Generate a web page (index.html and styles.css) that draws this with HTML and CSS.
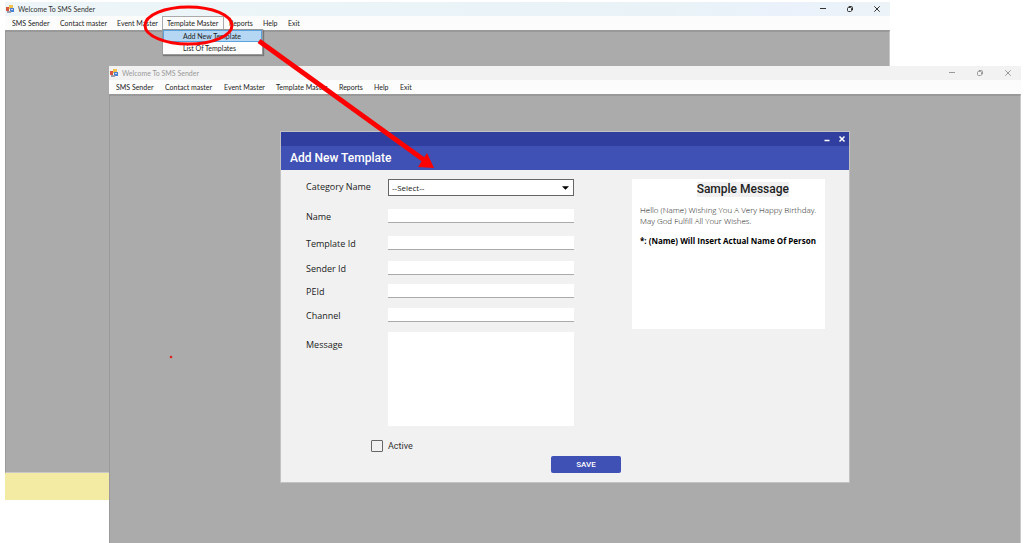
FILE: index.html
```html
<!DOCTYPE html>
<html lang="en">
<head>
<meta charset="utf-8">
<title>Welcome To SMS Sender</title>
<link rel="stylesheet" href="styles.css">
</head>
<body>
<main class="desktop">
  <section class="window window-back" aria-label="SMS Sender main window">
    <header class="titlebar">
      <svg class="app-icon" viewBox="0 0 9 9" aria-hidden="true"><rect x="3" y="0" width="4" height="4" fill="#f2c14b"/><rect x="0" y="2" width="3" height="4" fill="#d4583f"/><rect x="4" y="3" width="4" height="4" fill="#4d7fd0"/><rect x="1" y="6" width="4" height="2" fill="#9a9fb0"/><rect x="5" y="4" width="2" height="1" fill="#bcd3f5"/></svg>
      <span class="title">Welcome To SMS Sender</span>
      <div class="controls">
        <button type="button" aria-label="Minimize"><svg viewBox="0 0 8 8"><path d="M1 3.500H7"/></svg></button>
        <button type="button" aria-label="Restore"><svg viewBox="0 0 8 8"><rect x="1.500" y="2.500" width="4" height="4" rx="1"/><path d="M2.700 1.500H5.300Q6.500 1.500 6.500 2.700V5.300"/></svg></button>
        <button type="button" aria-label="Close"><svg viewBox="0 0 8 8"><path d="M1.300 1.300L6.700 6.700M6.700 1.300L1.300 6.700"/></svg></button>
      </div>
    </header>
    <nav class="menubar">
      <button type="button">SMS Sender</button>
      <button type="button">Contact master</button>
      <button type="button">Event Master</button>
      <div class="menu-open">
        <button type="button" class="open">Template Master</button>
        <div class="dropdown">
          <button type="button" class="selected">Add New Template</button>
          <button type="button">List Of Templates</button>
        </div>
      </div>
      <button type="button">Reports</button>
      <button type="button">Help</button>
      <button type="button">Exit</button>
    </nav>
    <div class="workspace"></div>
    <footer class="statusbar"></footer>
  </section>

  <section class="window window-front" aria-label="SMS Sender template window">
    <header class="titlebar">
      <svg class="app-icon" viewBox="0 0 9 9" aria-hidden="true"><rect x="3" y="0" width="4" height="4" fill="#f2c14b"/><rect x="0" y="2" width="3" height="4" fill="#d4583f"/><rect x="4" y="3" width="4" height="4" fill="#4d7fd0"/><rect x="1" y="6" width="4" height="2" fill="#9a9fb0"/><rect x="5" y="4" width="2" height="1" fill="#bcd3f5"/></svg>
      <span class="title">Welcome To SMS Sender</span>
      <div class="controls">
        <button type="button" aria-label="Minimize"><svg viewBox="0 0 8 8"><path d="M1 3.500H7"/></svg></button>
        <button type="button" aria-label="Restore"><svg viewBox="0 0 8 8"><rect x="1.500" y="2.500" width="4" height="4" rx="1"/><path d="M2.700 1.500H5.300Q6.500 1.500 6.500 2.700V5.300"/></svg></button>
        <button type="button" aria-label="Close"><svg viewBox="0 0 8 8"><path d="M1.300 1.300L6.700 6.700M6.700 1.300L1.300 6.700"/></svg></button>
      </div>
    </header>
    <nav class="menubar">
      <button type="button">SMS Sender</button>
      <button type="button">Contact master</button>
      <button type="button">Event Master</button>
      <button type="button">Template Master</button>
      <button type="button">Reports</button>
      <button type="button">Help</button>
      <button type="button">Exit</button>
    </nav>
    <div class="workspace">
      <form class="dialog">
        <div class="dialog-bar">
          <button type="button" aria-label="Minimize"><svg viewBox="0 0 8 8"><path d="M1.500 5.500H6.500"/></svg></button>
          <button type="button" aria-label="Close"><svg viewBox="0 0 8 8"><path d="M1.500 1.500L6.500 6.500M6.500 1.500L1.500 6.500"/></svg></button>
        </div>
        <h1 class="dialog-title">Add New Template</h1>
        <div class="dialog-body">
          <div class="fields">
            <label for="category">Category Name</label>
            <select id="category"><option>--Select--</option></select>
            <label for="name">Name</label>
            <input type="text" id="name">
            <label for="template-id">Template Id</label>
            <input type="text" id="template-id">
            <label for="sender-id">Sender Id</label>
            <input type="text" id="sender-id">
            <label for="peid">PEId</label>
            <input type="text" id="peid">
            <label for="channel">Channel</label>
            <input type="text" id="channel">
            <label for="message" class="message-label">Message</label>
            <textarea id="message"></textarea>
          </div>
          <aside class="sample">
            <h2>Sample Message</h2>
            <p>Hello (Name) Wishing You A Very Happy Birthday.<br>May God Fulfill All Your Wishes.</p>
            <p class="note">*: (Name) Will Insert Actual Name Of Person</p>
          </aside>
        </div>
        <label class="active"><input type="checkbox">Active</label>
        <button type="submit" class="save">SAVE</button>
      </form>
    </div>
  </section>

  <svg class="annotation" width="440" height="370" viewBox="0 0 440 370" aria-hidden="true">
    <ellipse cx="188.500" cy="25.500" rx="43.500" ry="18.500" fill="none" stroke="#f00" stroke-width="3"/>
    <path d="M259 41L424 160" stroke="#f00" stroke-width="4.800"/>
    <path d="M434 168L427 153L418 167Z" fill="#f00"/>
    <circle cx="171" cy="357" r="1.300" fill="#d22"/>
  </svg>
</main>
</body>
</html>
```

FILE: styles.css
```css
* { box-sizing: border-box; }
body {
  margin: 0;
  background: #fff;
  color: #222;
  font-family: Lato, "Open Sans", sans-serif;
}
button {
  margin: 0;
  padding: 0;
  border: 0;
  background: none;
  color: inherit;
  font: inherit;
  white-space: nowrap;
}
.desktop {
  position: relative;
  min-height: 100vh;
  overflow: hidden;
}

.window {
  position: absolute;
  display: flex;
  flex-direction: column;
  font-size: 7px;
}
.window-back { top: 2px; left: 5px; right: 134px; bottom: 43px; }
.window-front { top: 66px; left: 109px; right: 3px; bottom: 0; }

.titlebar {
  display: flex;
  align-items: center;
  gap: 3px;
  flex: none;
  height: 14px;
  padding: 0 9px 0 1px;
  background: #f2f2f2;
  color: #999;
}
.window-back .titlebar {
  background: linear-gradient(90deg, #edf5f8, #e9f3f7 75%, #eaf1fb 88%, #ecf4f8);
  color: #333;
}
.app-icon { width: 9px; height: 9px; }
.controls { display: flex; gap: 19px; margin-left: auto; }
.window-front .controls { gap: 20px; }
.controls button { width: 8px; height: 8px; }
.controls svg,
.dialog-bar svg {
  display: block;
  width: 8px;
  height: 8px;
  fill: none;
  stroke: currentColor;
}
.dialog-bar svg { stroke-width: 1.5; }

.menubar {
  display: grid;
  grid-template-columns: 48px 57px 50px 62px 34px 25px 25px;
  flex: none;
  height: 14px;
  padding-left: 7px;
  background: #fcfcfc;
  color: #222;
}
.window-front .menubar { grid-template-columns: 49px 59px 52px 63px 35px 26px 26px; }
.menubar button { text-align: left; }
.menu-open { position: relative; display: flex; }
.menubar .open {
  flex: none;
  width: 62px;
  margin-left: -5px;
  padding-left: 4px;
  border: solid #aaa;
  border-width: 0 1px;
  box-shadow: inset 0 1px #aaa;
  background: #fcfcfc;
}
.dropdown {
  position: absolute;
  z-index: 2;
  top: 13px;
  left: -5px;
  display: flex;
  flex-direction: column;
  width: 101px;
  background: #fdfdfd;
  border: 1px solid #999;
  box-shadow: 1px 1px 1px #777;
}
.dropdown button { height: 12px; padding-left: 19px; border: 1px solid transparent; }
.dropdown .selected { background: #b5d7f3; border-color: #5ba3dd; }

.workspace {
  flex: 1;
  background: #ababab;
  border: 1px solid #999;
  border-top: 2px solid #999;
  border-right-color: #c8c8c8;
}
.window-front .workspace { border-bottom: 0; }
.window-back .workspace { border-bottom-color: #c8c8c8; }
.statusbar { flex: none; height: 27px; background: #f3eba3; }

.dialog {
  display: flex;
  flex-direction: column;
  margin: 36px 171px 0;
  padding-bottom: 9px;
  background: #f1f1f1;
  box-shadow: 0 0 0 1px #c2c2c2;
}
.dialog-bar {
  display: flex;
  justify-content: flex-end;
  align-items: center;
  gap: 7px;
  height: 14px;
  padding-right: 3px;
  background: #303f9f;
  color: #fff;
}
.dialog-title {
  margin: 0;
  padding-left: 9px;
  background: #3f51b5;
  color: #fff;
  font: 500 12px/24px Roboto, sans-serif;
}
.dialog-body {
  display: flex;
  justify-content: space-between;
  align-items: flex-start;
  gap: 24px;
  padding: 9px 24px 0 25px;
}
.fields {
  display: grid;
  grid-template-columns: 82px 186px;
  grid-template-rows: 30px 27px 25px 23px 24px 24px 94px;
  align-items: start;
  font: 9px/15px "Open Sans", sans-serif;
}
.fields .message-label { margin-top: 5px; }
.fields input,
.fields textarea {
  width: 100%;
  height: 14px;
  padding: 0 3px;
  border: 0;
  border-bottom: 1px solid #aaa;
  background: #fff;
  font: inherit;
}
.fields textarea { height: 94px; border: 0; resize: none; }
.fields select {
  width: 100%;
  height: 17px;
  padding: 0 3px;
  border: 1px solid #666;
  border-radius: 0;
  appearance: none;
  background: #fff url("data:image/svg+xml,%3Csvg xmlns='http://www.w3.org/2000/svg' viewBox='0 0 8 4'%3E%3Cpath d='M0 0H8L4 4Z'/%3E%3C/svg%3E") no-repeat right 4px center / 7px 4px;
  color: #222;
  font: 8px "Open Sans", sans-serif;
}
.sample {
  flex: none;
  width: 193px;
  height: 150px;
  padding: 3px 8px;
  background: #fff;
  color: #222;
  font: 300 8px/11px "Open Sans", sans-serif;
}
.sample h2 {
  width: fit-content;
  margin: 0 28px 7px auto;
  background: #f1f1f1;
  color: #222;
  font: 500 12px/15px Roboto, sans-serif;
}
.sample p { margin: 0 0 9px; white-space: nowrap; }
.sample .note { color: #000; font-weight: 700; }
.active {
  display: flex;
  align-items: center;
  gap: 5px;
  align-self: flex-start;
  margin: 14px 0 0 90px;
  color: #333;
  font: 9px/12px Roboto, sans-serif;
}
.active input {
  width: 12px;
  height: 12px;
  margin: 0;
  appearance: none;
  border: 1px solid #666;
  border-radius: 1px;
}
.save {
  width: 70px;
  height: 17px;
  margin: 4px 0 0 270px;
  border-radius: 2px;
  background: #3f51b5;
  color: #fff;
  font: 500 8px Roboto, sans-serif;
}
.annotation { position: absolute; z-index: 3; top: 0; left: 0; pointer-events: none; }
```
